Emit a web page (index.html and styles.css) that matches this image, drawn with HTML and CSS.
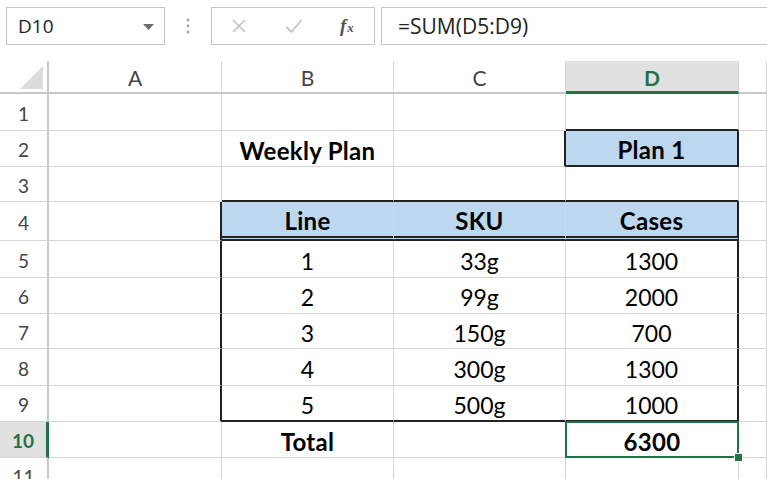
FILE: index.html
```html
<!DOCTYPE html>
<html>
	<head>
		<meta charset="utf-8">
		<title>Weekly Plan</title>
		<link rel="stylesheet" href="styles.css">
	</head>
	<body>
		<div class="formulaBar">
			<div class="nameBox">
				<span>D10</span>
				<svg class="dropArrow" width="11" height="6" viewBox="0 0 11 6"><path d="M0 0 L11 0 L5.5 6 Z" fill="#6d6d6d"/></svg>
			</div>
			<div class="grip">
				<svg width="4" height="16" viewBox="0 0 4 16"><circle cx="2" cy="2" r="1.4" fill="#a6a6a6"/><circle cx="2" cy="8" r="1.4" fill="#a6a6a6"/><circle cx="2" cy="14" r="1.4" fill="#a6a6a6"/></svg>
			</div>
			<div class="fxButtons">
				<svg class="btnIcon" width="16" height="16" viewBox="0 0 16 16"><path d="M2 2 L14 14 M14 2 L2 14" stroke="#c3c3c3" stroke-width="1.6" fill="none"/></svg>
				<svg class="btnIcon" width="18" height="16" viewBox="0 0 18 16"><path d="M1.5 9 L6.5 14 L16.5 2" stroke="#c3c3c3" stroke-width="1.8" fill="none"/></svg>
				<span class="fx">f<sub>x</sub></span>
			</div>
			<div class="formulaInput">=SUM(D5:D9)</div>
		</div>

		<div class="sheet">
			<!-- column headers -->
			<div class="corner"></div>
			<div class="ch">A</div>
			<div class="ch">B</div>
			<div class="ch">C</div>
			<div class="ch active">D</div>
			<div class="ch"></div>

			<!-- row 1 -->
			<div class="rh">1</div>
			<div class="c"></div>
			<div class="c"></div>
			<div class="c"></div>
			<div class="c bb"></div>
			<div class="c"></div>

			<!-- row 2 -->
			<div class="rh">2</div>
			<div class="c"></div>
			<div class="c bold">Weekly Plan</div>
			<div class="c br"></div>
			<div class="c bold fill br bb">Plan 1</div>
			<div class="c"></div>

			<!-- row 3 -->
			<div class="rh">3</div>
			<div class="c"></div>
			<div class="c bb"></div>
			<div class="c bb"></div>
			<div class="c bb"></div>
			<div class="c"></div>

			<!-- row 4 -->
			<div class="rh">4</div>
			<div class="c br"></div>
			<div class="c bold fill dbl">Line</div>
			<div class="c bold fill dbl">SKU</div>
			<div class="c bold fill dbl br">Cases</div>
			<div class="c"></div>

			<!-- rows 5-9 -->
			<div class="rh">5</div>
			<div class="c br"></div>
			<div class="c">1</div>
			<div class="c">33g</div>
			<div class="c br">1300</div>
			<div class="c"></div>

			<div class="rh">6</div>
			<div class="c br"></div>
			<div class="c">2</div>
			<div class="c">99g</div>
			<div class="c br">2000</div>
			<div class="c"></div>

			<div class="rh">7</div>
			<div class="c br"></div>
			<div class="c">3</div>
			<div class="c">150g</div>
			<div class="c br">700</div>
			<div class="c"></div>

			<div class="rh">8</div>
			<div class="c br"></div>
			<div class="c">4</div>
			<div class="c">300g</div>
			<div class="c br">1300</div>
			<div class="c"></div>

			<div class="rh">9</div>
			<div class="c br"></div>
			<div class="c bb">5</div>
			<div class="c bb">500g</div>
			<div class="c br bb">1000</div>
			<div class="c"></div>

			<!-- row 10 -->
			<div class="rh active">10</div>
			<div class="c"></div>
			<div class="c bold">Total</div>
			<div class="c"></div>
			<div class="c bold selected">6300</div>
			<div class="c"></div>

			<!-- row 11 -->
			<div class="rh">11</div>
			<div class="c"></div>
			<div class="c"></div>
			<div class="c"></div>
			<div class="c"></div>
			<div class="c"></div>
		</div>
	</body>
</html>
```

FILE: styles.css
```css
body{
	margin: 0;
	padding: 0;
	background: #ffffff;
	overflow: hidden;
	font-family: "Open Sans", "Noto Sans", sans-serif;
}
.formulaBar{
	display: flex;
	align-items: stretch;
	height: 38px;
	padding: 7px 0 0 6px;
}
.nameBox{
	width: 159px;
	box-sizing: border-box;
	border: 1px solid #c6c6c6;
	display: flex;
	align-items: center;
	justify-content: space-between;
	padding: 0 10px 0 11px;
	font-size: 19px;
	color: #222222;
}
.dropArrow{
	margin-top: 1px;
}
.grip{
	width: 46px;
	display: flex;
	align-items: center;
	justify-content: center;
}
.fxButtons{
	width: 164px;
	box-sizing: border-box;
	border: 1px solid #c6c6c6;
	display: flex;
	align-items: center;
	padding-left: 19px;
}
.btnIcon{
	margin-right: 38px;
}
.fx{
	font-family: "Liberation Serif", serif;
	font-style: italic;
	font-weight: bold;
	font-size: 19px;
	color: #555555;
	margin-left: -1px;
}
.fx sub{
	font-size: 13px;
	vertical-align: 0;
	margin-left: 1px;
}
.formulaInput{
	flex: 1;
	margin-left: 6px;
	border: 1px solid #c6c6c6;
	border-right: none;
	display: flex;
	align-items: center;
	padding-left: 16px;
	font-size: 21px;
	color: #222222;
}

.sheet{
	margin-top: 16px;
	display: grid;
	grid-template-columns: 49px 173px 172px 172px 173px 1fr;
	grid-template-rows: 33px 37px 36px 35px 39px 37px 36px 35px 37px 36px 36px 36px;
	font-family: Lato, "Open Sans", sans-serif;
}
.sheet > div{
	box-sizing: border-box;
	display: flex;
	align-items: center;
	justify-content: center;
}
.corner{
	border-right: 2px solid #c8c8c8;
	border-bottom: 2px solid #c8c8c8;
	position: relative;
}
.corner::after{
	content: "";
	position: absolute;
	right: 4px;
	bottom: 3px;
	width: 0;
	height: 0;
	border-left: 23px solid transparent;
	border-bottom: 23px solid #dcdcdc;
}
.ch{
	border-right: 1px solid #d6d6d6;
	border-bottom: 2px solid #c8c8c8;
	font-size: 21px;
	color: #444444;
	padding-top: 2px;
}
.ch.active{
	background: #e1e1e1;
	border-bottom: 3px solid #217346;
	color: #217346;
	font-weight: bold;
}
.rh{
	border-right: 2px solid #c8c8c8;
	border-bottom: 1px solid #d6d6d6;
	font-size: 19px;
	color: #444444;
	padding-top: 2px;
}
.rh.active{
	background: #e1e1e1;
	border-right: 3px solid #217346;
	color: #217346;
	font-weight: bold;
}
.c{
	border-right: 1px solid #d6d6d6;
	border-bottom: 1px solid #d6d6d6;
	font-size: 23px;
	color: #000000;
	padding-top: 3px;
}
.bold{
	font-weight: bold;
	font-size: 24px;
	letter-spacing: 0.3px;
}
.fill{
	background: #bdd7ee;
}
.c.br{
	border-right: 2px solid #222222;
}
.c.bb{
	border-bottom: 2px solid #222222;
}
.c.dbl{
	border-bottom: 5px double #222222;
}
.selected{
	position: relative;
}
.selected::before{
	content: "";
	position: absolute;
	left: -1px;
	top: -1px;
	right: -1px;
	bottom: -1px;
	border: 2px solid #217346;
}
.selected::after{
	content: "";
	position: absolute;
	right: -5px;
	bottom: -5px;
	width: 7px;
	height: 7px;
	background: #217346;
	border: 1px solid #ffffff;
}
```
